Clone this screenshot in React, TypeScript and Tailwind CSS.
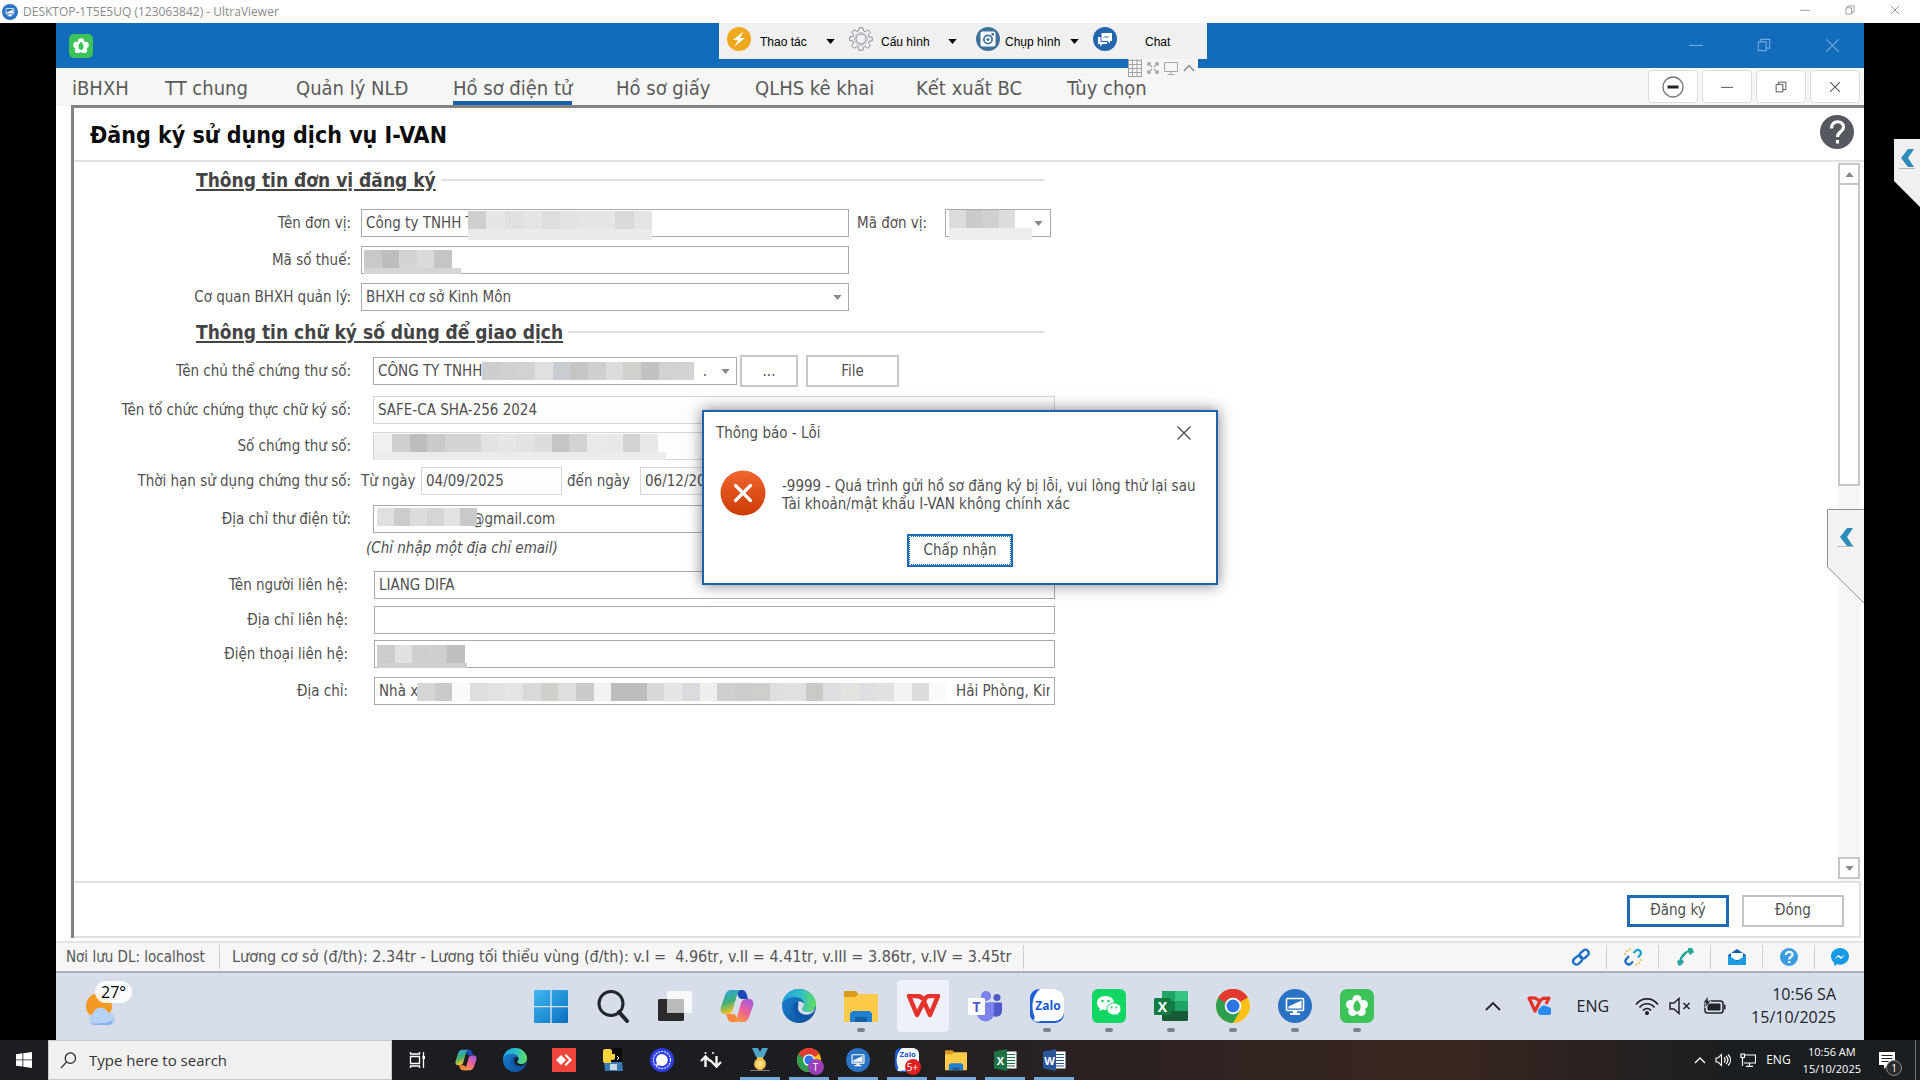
import type { ReactNode } from "react";

const tahoma = "font-['DejaVu_Sans_Condensed','DejaVu_Sans',sans-serif]";
const segoe = "font-['Open_Sans','Noto_Sans',sans-serif]";

/* ---------- small drawings ---------- */

function Caret({ className = "" }: { className?: string }) {
  return (
    <svg viewBox="0 0 10 6" className={`h-[5px] w-[9px] ${className}`} aria-hidden="true">
      <path d="M0 0h10L5 6z" fill="currentColor" />
    </svg>
  );
}

function Minimize({ className = "" }: { className?: string }) {
  return (
    <svg viewBox="0 0 16 16" className={className} fill="none" stroke="currentColor" strokeWidth="1.300" aria-hidden="true">
      <path d="M0 8.500h16" />
    </svg>
  );
}

function Restore({ className = "" }: { className?: string }) {
  return (
    <svg viewBox="0 0 16 16" className={className} fill="none" stroke="currentColor" strokeWidth="1.300" aria-hidden="true">
      <path d="M1.500 4.500h9v10h-9zM4.500 4.500v-3h10v10h-4" />
    </svg>
  );
}

function Cross({ className = "" }: { className?: string }) {
  return (
    <svg viewBox="0 0 16 16" className={className} fill="none" stroke="currentColor" strokeWidth="1.400" aria-hidden="true">
      <path d="M1.500 1.500l13 13M14.500 1.500l-13 13" />
    </svg>
  );
}

function ViewerIcon({ className = "" }: { className?: string }) {
  return (
    <svg viewBox="0 0 34 34" className={className} aria-hidden="true">
      <circle cx="17" cy="17" r="17" fill="#2a72c4" />
      <rect x="8.500" y="9.500" width="17" height="12" rx="1" fill="none" stroke="#fff" strokeWidth="1.600" />
      <path d="M10.500 19.500V17.500L23.500 11.500v8z" fill="#fff" />
      <path d="M15 22h4v2h3v2H12v-2h3z" fill="#fff" />
    </svg>
  );
}

function LotusIcon({ className = "" }: { className?: string }) {
  return (
    <svg viewBox="0 0 34 34" className={className} aria-hidden="true">
      <rect width="34" height="34" rx="7" fill="#3cc458" />
      <g fill="#fff">
        <circle cx="17" cy="10.500" r="4.500" />
        <circle cx="10.500" cy="15.500" r="4.500" />
        <circle cx="23.500" cy="15.500" r="4.500" />
        <circle cx="12.800" cy="22.500" r="4.500" />
        <circle cx="21.200" cy="22.500" r="4.500" />
      </g>
      <path d="M17 11c3 3 4 5 3.500 8-.3 2-1.500 3.500-3.500 3.500s-3.200-1.500-3.500-3.500c-.5-3 .5-5 3.500-8z" fill="#3cc458" />
    </svg>
  );
}

function WindowsLogo() {
  return (
    <svg viewBox="0 0 34 34" className="size-[34px]" aria-hidden="true">
      <defs>
        <linearGradient id="win" x1="0" y1="0" x2="1" y2="1">
          <stop offset="0" stopColor="#3fb9f0" />
          <stop offset="1" stopColor="#0a6fc2" />
        </linearGradient>
      </defs>
      <path d="M0 2a1 1 0 0 1 1-1h15.300v16H0zM17.700 1H33a1 1 0 0 1 1 1v15H17.700zM0 18.300h16.300V34H1a1 1 0 0 1-1-1zM17.700 18.300H34V33a1 1 0 0 1-1 1H17.700z" fill="url(#win)" />
    </svg>
  );
}

function SearchGlyph() {
  return (
    <svg viewBox="0 0 34 34" className="size-[34px]" fill="none" stroke="#22262c" aria-hidden="true">
      <circle cx="15" cy="14.500" r="12" strokeWidth="3" />
      <path d="M23 23l8 9" strokeWidth="4" strokeLinecap="round" />
    </svg>
  );
}

function TaskViewGlyph() {
  return (
    <svg viewBox="0 0 34 34" className="size-[34px]" aria-hidden="true">
      <rect x="0" y="10" width="26" height="22" rx="1.500" fill="#2b2b2b" />
      <rect x="9" y="2" width="25" height="22" rx="1.500" fill="#fff" opacity=".82" />
      <rect x="9" y="10" width="17" height="14" fill="#b9babc" />
    </svg>
  );
}

function CopilotIcon({ className = "" }: { className?: string }) {
  return (
    <svg viewBox="0 0 34 34" className={className} aria-hidden="true">
      <defs>
        <linearGradient id="cpA" x1="0" y1="0" x2="0.300" y2="1">
          <stop offset="0" stopColor="#2aa6ef" />
          <stop offset=".55" stopColor="#3fae7a" />
          <stop offset="1" stopColor="#f2c521" />
        </linearGradient>
        <linearGradient id="cpB" x1="0.800" y1="0" x2="0.300" y2="1">
          <stop offset="0" stopColor="#a35be0" />
          <stop offset=".5" stopColor="#ec5f9b" />
          <stop offset="1" stopColor="#fb9a3c" />
        </linearGradient>
      </defs>
      <path d="M16 1h6c3 0 4 2 5 5l1 4h-6c-2 0-3-1-4-3z" fill="#1e48b8" />
      <path d="M11 1h10c-2 0-3 2-4 5l-4 14c-1 4-3 5-6 5H5c-4 0-5-3-4-7L5 6c1-3 3-5 6-5z" fill="url(#cpA)" />
      <path d="M18 33h-6c-3 0-4-2-5-5l-1-3h6c2 0 3 0 4 2z" fill="#f7873e" />
      <path d="M23 33H13c2 0 3-2 4-5l4-14c1-3 3-4 6-4h2c4 0 5 3 4 7l-4 11c-1 3-3 5-6 5z" fill="url(#cpB)" />
    </svg>
  );
}

function EdgeIcon({ className = "", gap = "#d7deea" }: { className?: string; gap?: string }) {
  return (
    <svg viewBox="0 0 34 34" className={className} aria-hidden="true">
      <defs>
        <linearGradient id="edA" x1="0" y1="0.300" x2="1" y2="0.400">
          <stop offset="0" stopColor="#1f9fe0" />
          <stop offset=".55" stopColor="#30bfc4" />
          <stop offset="1" stopColor="#62dc61" />
        </linearGradient>
        <linearGradient id="edB" x1="0" y1="0" x2="1" y2="1">
          <stop offset="0" stopColor="#1b86d8" />
          <stop offset="1" stopColor="#0c4a94" />
        </linearGradient>
      </defs>
      <circle cx="17" cy="17" r="17" fill="url(#edB)" />
      <path d="M0 16C1 6 8 0 17 0c10 0 17 7 17 15 0 5-4 8-8 8-3 0-6-1-6-3 0-1 2-2 2-5 0-4-4-7-9-7C6 8 1 11 0 16z" fill="url(#edA)" />
      <path d="M13 14c-4 5-2 12 4 15 5 2 11 0 14-4 1-1 0-2-1-1-6 3-13 1-14-4-1-3 1-5 0-7-1-1-2 0-3 1z" fill="#0e57a8" />
      <path d="M16 13c2-1 5 0 6 2 0 3-2 4-2 5 0 2 3 3 6 3 3 0 5-1 7-3-1 3-3 4-5 5-6 2-12-1-12-6 0-2 1-4 0-6z" fill={gap} />
    </svg>
  );
}

function FolderIcon({ className = "" }: { className?: string }) {
  return (
    <svg viewBox="0 0 36 34" className={className} aria-hidden="true">
      <path d="M1 3a1 1 0 0 1 1-1h11l3 4-3 4H1z" fill="#d99a1c" />
      <path d="M1 8h11l4-3h18a1 1 0 0 1 1 1v26a1 1 0 0 1-1 1H2a1 1 0 0 1-1-1z" fill="#fccb47" />
      <path d="M7 33V26a4 4 0 0 1 4-4h14a4 4 0 0 1 4 4v7h-5v-5H12v5z" fill="#1f7fd0" />
      <path d="M12 28h12v5H12z" fill="#155fa6" />
    </svg>
  );
}

function WpsIcon() {
  return (
    <svg viewBox="0 0 34 24" className="h-6 w-[34px]" fill="none" stroke="#e5322a" strokeWidth="4.500" strokeLinejoin="round" aria-hidden="true">
      <path d="M17 5c-3-4-6-3-14-3l8 19 8-16c2-4 5-3 13-3l-8 19-6-13" />
    </svg>
  );
}

function TeamsIcon() {
  return (
    <svg viewBox="0 0 34 34" className="size-[34px]" aria-hidden="true">
      <circle cx="18" cy="7" r="5" fill="#7b83eb" />
      <circle cx="29" cy="8.500" r="3.500" fill="#5059c9" />
      <path d="M21 13.500h12a1 1 0 0 1 1 1V22a6 6 0 0 1-9 5z" fill="#5059c9" />
      <path d="M9 13.500h17V24a8.500 8.500 0 0 1-17 0z" fill="#7b83eb" />
      <rect x="0" y="9" width="17" height="17" rx="1" fill="#fff" />
      <text x="8.500" y="22.500" textAnchor="middle" fontSize="14" fontWeight="700" fill="#5059c9" fontFamily="Open Sans, sans-serif">T</text>
    </svg>
  );
}

function ZaloIcon({ className = "", small }: { className?: string; small?: boolean }) {
  return (
    <svg viewBox="0 0 34 34" className={className} aria-hidden="true">
      <rect width="34" height="34" rx="9" fill="#1a5fd6" />
      <path d="M10 0h15a9 9 0 0 1 9 9v14a9 9 0 0 1-9 9H11c-3 1-6 1-8-1 2-1 2-3 1-5-3-8-2-19 6-26z" fill="#fff" />
      <text x="18" y={small ? 13 : 20.5} textAnchor="middle" fontSize={small ? 11 : 12} fontWeight="700" fill="#1558d6" fontFamily="Open Sans, sans-serif">Zalo</text>
    </svg>
  );
}

function WeChatIcon() {
  return (
    <svg viewBox="0 0 34 34" className="size-[34px]" aria-hidden="true">
      <rect width="34" height="34" rx="6" fill="#12d765" />
      <path d="M13.500 7C8.500 7 5 10.200 5 14c0 2.200 1.100 4 3 5.300L7.300 22l3-1.500c1 .3 2 .4 3.200.4 5 0 8.500-3 8.500-6.900S18.500 7 13.500 7z" fill="#fff" />
      <path d="M22 14c-4 0-7 2.700-7 6s3 6 7 6c.9 0 1.700-.1 2.500-.4L27 27l-.6-2.300c1.600-1.100 2.600-2.800 2.600-4.700 0-3.300-3-6-7-6z" fill="#fff" stroke="#12d765" />
      <g fill="#12d765">
        <circle cx="10.500" cy="12" r="1.300" />
        <circle cx="16.500" cy="12" r="1.300" />
        <circle cx="19.700" cy="18.500" r="1" />
        <circle cx="24.300" cy="18.500" r="1" />
      </g>
    </svg>
  );
}

function ExcelIcon() {
  return (
    <svg viewBox="0 0 34 32" className="h-8 w-[34px]" aria-hidden="true">
      <rect x="8" y="1" width="26" height="30" rx="1.500" fill="#185c37" />
      <path d="M8 1h13v10H8z" fill="#21a366" />
      <path d="M21 1h12l1 1v9H21z" fill="#33c481" />
      <path d="M8 11h13v10H8z" fill="#107c41" />
      <path d="M21 11h13v10H21z" fill="#21a366" />
      <rect x="0" y="8" width="17" height="17" rx="1.500" fill="#107c41" />
      <text x="8.500" y="21.500" textAnchor="middle" fontSize="14" fontWeight="700" fill="#fff" fontFamily="Open Sans, sans-serif">X</text>
    </svg>
  );
}

function ChromeIcon({ className = "" }: { className?: string }) {
  return (
    <svg viewBox="0 0 34 34" className={className} aria-hidden="true">
      <circle cx="17" cy="17" r="17" fill="#fbc116" />
      <path d="M17 17L2.300 8.500A17 17 0 0 1 31.700 8.500z" fill="#e23a2e" />
      <path d="M2.300 8.500A17 17 0 0 0 17 34l7.400-12.800L17 17z" fill="#2e9e4f" />
      <path d="M2.300 8.500L9.600 21.200 17 17l3-8.500z" fill="#2e9e4f" />
      <path d="M2.300 8.500A17 17 0 0 1 31.700 8.500H17a8.500 8.500 0 0 0-8 5.500z" fill="#e23a2e" />
      <circle cx="17" cy="17" r="8.300" fill="#fff" />
      <circle cx="17" cy="17" r="6.500" fill="#2f74e6" />
    </svg>
  );
}

function OfficeIcon({ letter, color }: { letter: string; color: string }) {
  return (
    <svg viewBox="0 0 24 24" className="size-6" aria-hidden="true">
      <rect x="12" y="3.500" width="11.500" height="17" fill="#fff" />
      <path d="M14 6.500h8M14 9.500h8M14 12.500h8M14 15.500h8M14 18h8" stroke={color} strokeWidth="1.200" />
      <path d="M1 3.500L14 1v22L1 20.500z" fill={color} />
      <text x="7.500" y="16.500" textAnchor="middle" fontSize="11" fontWeight="700" fill="#fff" fontFamily="Open Sans, sans-serif">{letter}</text>
    </svg>
  );
}

/* ---------- pixelated privacy patches ---------- */

function Mosaic({ place, cells, under }: { place: string; cells: string[]; under?: string }) {
  return (
    <div className={`pointer-events-none absolute ${place}`} aria-hidden="true">
      <div className="flex h-[18px]">
        {cells.map((c, i) => (
          <span key={i} className="h-full flex-1" style={{ backgroundColor: c }} />
        ))}
      </div>
      {under && <div className={under} />}
    </div>
  );
}

/* ---------- viewer chrome ---------- */

function ViewerTitle() {
  return (
    <header className={`flex h-[23px] items-center justify-between bg-white pl-[2px] text-[#8a8a8a] ${segoe}`}>
      <div className="flex items-center gap-[5px]">
        <ViewerIcon className="size-4" />
        <h1 className="text-xs font-normal">DESKTOP-1T5E5UQ (123063842) - UltraViewer</h1>
      </div>
      <div className="flex pr-[2px] pb-1">
        <button aria-label="Minimize" className="grid w-[45px] place-items-center"><Minimize className="size-[10px]" /></button>
        <button aria-label="Restore" className="grid w-[45px] place-items-center"><Restore className="size-[10px]" /></button>
        <button aria-label="Close" className="grid w-[46px] place-items-center"><Cross className="size-[10px]" /></button>
      </div>
    </header>
  );
}

function ViewerToolbar() {
  return (
    <div className="absolute top-0 left-1/2 -ml-[241px] w-[488px] font-['Liberation_Sans',sans-serif] text-xs text-black">
      <div className="flex h-9 items-center bg-[#f0f0f0] pl-2">
        <button className="flex w-[122px] items-center">
          <svg viewBox="0 0 24 24" className="-mt-1 size-6" aria-hidden="true">
            <circle cx="12" cy="12" r="12" fill="#f0a81c" />
            <path d="M16.500 4.500L6 13h5l-3.500 6.500L18 11h-5z" fill="#fff" />
          </svg>
          <span className="w-[62px] pt-[2px] pl-[9px] text-left whitespace-nowrap">Thao tác</span>
          <Caret className="ml-[13px]" />
        </button>
        <button className="flex w-[127px] items-center">
          <svg viewBox="0 0 24 24" className="-mt-1 size-6" fill="none" stroke="#6d7683" strokeWidth=".8" aria-hidden="true">
            <circle cx="12" cy="12" r="5" />
            <circle cx="12" cy="12" r="6.500" strokeWidth=".4" />
            <path d="M10 .800h4l.5 3 2 .8L19 2.900 21.500 5.500 19.500 8l.8 2 3 .3v3.500l-3 .5-.8 2 1.900 2.500-2.600 2.600-2.500-1.900-1.900.8-.4 3h-4l-.4-3-2-.8-2.500 1.900-2.500-2.600L4.500 16l-.8-2-3-.5V10l3-.4.8-2L2.700 5.200 5.200 2.700 7.700 4.500l1.900-.8z" />
          </svg>
          <span className="w-[62px] pt-[2px] pl-2 text-left whitespace-nowrap">Cấu hình</span>
          <Caret className="ml-[13px]" />
        </button>
        <button className="flex w-[117px] items-center">
          <svg viewBox="0 0 24 24" className="-mt-1 size-6" aria-hidden="true">
            <circle cx="12" cy="12" r="12" fill="#3f729b" />
            <rect x="4.500" y="4.500" width="15" height="15" rx="2" fill="#fff" />
            <circle cx="12" cy="12.500" r="5" fill="#3f729b" />
            <circle cx="12" cy="12.500" r="3.200" fill="#fff" />
            <circle cx="12" cy="12.500" r="1.600" fill="#3f729b" />
            <rect x="15.500" y="6" width="2.500" height="2.500" fill="#3f729b" />
          </svg>
          <span className="w-[62px] pt-[2px] pl-[5px] text-left whitespace-nowrap">Chụp hình</span>
          <Caret className="ml-2" />
        </button>
        <button className="flex items-center">
          <svg viewBox="0 0 24 24" className="-mt-1 size-6" aria-hidden="true">
            <circle cx="12" cy="12" r="12" fill="#2466ae" />
            <path d="M8.500 6h10.500v8h-2v2.500L14.500 14h-6z" fill="#fff" />
            <path d="M5 10h2.500v5H14v2H9.500L7 19.500V17H5z" fill="#fff" />
            <path d="M10.500 10.500c1.500-2 2.500 1 5-1" fill="none" stroke="#2466ae" />
          </svg>
          <span className="pt-[2px] pl-7">Chat</span>
        </button>
      </div>
      <div className="ml-[409px] flex h-[18px] w-[70px] items-center gap-[5px] bg-[#f5f5f5] text-[#a3a3a3]">
        <svg viewBox="0 0 14 18" className="h-[18px] w-[14px]" fill="none" stroke="currentColor" aria-hidden="true">
          <path d="M.500 0v18M4.500 0v18M9 0v18M13.500 0v18M0 1.500h14M0 5.500h14M0 9.500h14M0 13.500h14M0 17.500h14" />
        </svg>
        <svg viewBox="0 0 12 12" className="size-3" fill="none" stroke="currentColor" strokeWidth="1.300" aria-hidden="true">
          <path d="M1 1l4 4M1 4V1h3M11 1L7 5M8 1h3v3M1 11l4-4M1 8v3h3M11 11L7 7M11 8v3H8" />
        </svg>
        <svg viewBox="0 0 14 14" className="size-[14px]" fill="none" stroke="currentColor" aria-hidden="true">
          <path d="M.500 1.500h13v9H.500zM7 10.500v2.500M3.500 13.500h7" />
        </svg>
        <svg viewBox="0 0 12 8" className="h-2 w-3" fill="none" stroke="#888" strokeWidth="1.500" aria-hidden="true">
          <path d="M1 7l5-5.500L11 7" />
        </svg>
      </div>
    </div>
  );
}

/* ---------- application ---------- */

const menu = [
  { name: "iBHXH", w: "w-[93px]" },
  { name: "TT chung", w: "w-[131px]" },
  { name: "Quản lý NLĐ", w: "w-[157px]" },
  { name: "Hồ sơ điện tử", w: "w-[163px]", on: true },
  { name: "Hồ sơ giấy", w: "w-[139px]" },
  { name: "QLHS kê khai", w: "w-[161px]" },
  { name: "Kết xuất BC", w: "w-[151px]" },
  { name: "Tùy chọn", w: "w-[100px]" },
];

const boxBtn = "grid h-[33px] w-[50px] place-items-center rounded-sm border border-[#dcdcdc] bg-white";

function MenuBar() {
  return (
    <nav className="flex h-[38px] items-start justify-between bg-[#f6f6f6] pr-1 pl-4">
      <div className="flex text-xl leading-8 text-[#5a5a5a]">
        {menu.map((m) => (
          <div key={m.name} className={`pt-1 whitespace-nowrap ${m.w}`}>
            <button className={`h-[33px] border-b-4 ${m.on ? "border-[#1561ad]" : "border-transparent"}`}>
              <span className="block h-[29px] leading-8">{m.name}</span>
            </button>
          </div>
        ))}
      </div>
      <div className="flex gap-1 pt-[2px] text-[#555]">
        <button aria-label="Collapse" className={boxBtn}>
          <svg viewBox="0 0 22 22" className="size-[22px]" fill="none" aria-hidden="true">
            <circle cx="11" cy="11" r="10" stroke="#777" strokeWidth="1.300" />
            <path d="M5.500 11h11" stroke="#222" strokeWidth="3" />
          </svg>
        </button>
        <button aria-label="Minimize window" className={boxBtn}><Minimize className="size-3" /></button>
        <button aria-label="Restore window" className={boxBtn}><Restore className="size-3" /></button>
        <button aria-label="Close window" className={boxBtn}><Cross className="size-3" /></button>
      </div>
    </nav>
  );
}

const field = "h-7 border border-[#aaaaaa] bg-white px-1 outline-none";
const dim = "h-7 border border-[#d6d6d6] bg-[#fdfdfd] px-1 outline-none";

function Row({ id, label, gap = "", top, late, children }: { id: string; label: string; gap?: string; top: string; late?: boolean; children: ReactNode }) {
  return (
    <div className={`flex h-7 items-center ${top}`}>
      <label htmlFor={id} className={`shrink-0 text-right whitespace-nowrap ${late ? "w-[274px]" : "w-[277px]"}`}>
        {label}
      </label>
      <div className={`relative flex items-center ${gap}`}>{children}</div>
    </div>
  );
}

function Section({ title, top }: { title: string; top: string }) {
  return (
    <div className={`flex h-7 w-[970px] items-center gap-[5px] pl-[122px] ${top}`}>
      <h3 className="text-[19px] font-bold whitespace-nowrap text-[#444] underline decoration-2 underline-offset-2">{title}</h3>
      <span className="h-[2px] flex-1 bg-[#e0e2e4]" />
    </div>
  );
}

function Form() {
  return (
    <form className="min-w-0 flex-1 overflow-hidden pt-1 text-[15px] text-[#505050]">
      <Section title="Thông tin đơn vị đăng ký" top="" />
      <Row id="unit" label="Tên đơn vị:" top="mt-[15px]" gap="ml-[10px]">
        <input id="unit" defaultValue="Công ty TNHH T" className={`${field} w-[488px]`} />
        <Mosaic place="left-[107px] top-[2px] w-[184px]" cells={["#cfcfcf", "#e6e6e7", "#e0e0e0", "#e4e4e4", "#dededf", "#e2e2e2", "#e5e5e3", "#e5e5e5", "#d9d9d8", "#e4e4e4"]} under="h-[11px] bg-[#e9eaea]" />
        <label htmlFor="code" className="ml-2 w-[88px] whitespace-nowrap">Mã đơn vị:</label>
        <select id="code" className={`${field} w-[106px] appearance-none`}><option></option></select>
        <Caret className="absolute right-2 text-[#888]" />
        <Mosaic place="right-[19px] top-px w-[83px]" cells={["#dcdcdc", "#cbcbcb", "#d0d0d0", "#dcdddd", "#ffffff"]} under="h-3 bg-[#ededed]" />
      </Row>
      <Row id="tax" label="Mã số thuế:" top="mt-[9px]" gap="ml-[10px]">
        <input id="tax" className={`${field} w-[488px]`} />
        <Mosaic place="left-[3px] top-1 w-[88px]" cells={["#c9c9c9", "#bdbdbd", "#d3d3d2", "#dadad9", "#c5c5c5"]} under="h-[6px] w-[97px] bg-[#d5d5d5]" />
      </Row>
      <Row id="agency" label="Cơ quan BHXH quản lý:" top="mt-[9px]" gap="ml-[10px]">
        <select id="agency" className={`${field} w-[488px] appearance-none`}><option>BHXH cơ sở Kinh Môn</option></select>
        <Caret className="absolute right-[7px] text-[#888]" />
      </Row>
      <Section title="Thông tin chữ ký số dùng để giao dịch" top="mt-[7px]" />
      <Row id="subject" label="Tên chủ thể chứng thư số:" top="mt-[11px]" gap="ml-[22px]">
        <div className="relative flex items-center">
          <select id="subject" className={`${field} w-[364px] appearance-none`}><option>CÔNG TY TNHH</option></select>
          <Mosaic place="left-[109px] top-[5px] w-[212px]" cells={["#cdcdcf", "#d0d0d3", "#d2d2d5", "#e0e0e1", "#c9ccd1", "#c5c5c5", "#cecfd0", "#dcdcda", "#d0d0cc", "#c2c2c0", "#d2d2d2", "#d3d3d3"]} />
          <span className="absolute right-[30px]">.</span>
          <Caret className="absolute right-[7px] text-[#888]" />
        </div>
        <button type="button" className="ml-[3px] h-8 w-[58px] border-2 border-[#c8c8c8] bg-white">...</button>
        <button type="button" className="ml-2 h-8 w-[93px] border-2 border-[#c8c8c8] bg-white">File</button>
      </Row>
      <Row id="issuer" label="Tên tổ chức chứng thực chữ ký số:" top="mt-[11px]" gap="ml-[22px]">
        <input id="issuer" readOnly defaultValue="SAFE-CA SHA-256 2024" className={`${dim} w-[682px]`} />
      </Row>
      <Row id="serial" label="Số chứng thư số:" top="mt-2" gap="ml-[22px]">
        <input id="serial" readOnly className={`${dim} w-[682px]`} />
        <Mosaic place="left-px top-[2px] w-[284px]" cells={["#f1f1ef", "#cfcfcf", "#bdbdbd", "#cacac9", "#d3d3d3", "#d3d3d3", "#e2e2e1", "#e6e6e6", "#e3e3e3", "#dddddd", "#c5c5c5", "#d2d2d2", "#e9e9e9", "#e8e8e8", "#d2d2d2", "#e8e8e8"]} under="h-2 w-[292px] bg-[#ebebea]" />
      </Row>
      <Row id="from" label="Thời hạn sử dụng chứng thư số:" top="mt-[7px]" gap="ml-[10px]">
        <span className="w-[60px] whitespace-nowrap">Từ ngày</span>
        <input id="from" readOnly defaultValue="04/09/2025" className={`${dim} w-[141px]`} />
        <label htmlFor="to" className="w-[78px] pl-[5px] whitespace-nowrap">đến ngày</label>
        <input id="to" readOnly defaultValue="06/12/2026" className={`${dim} w-[141px]`} />
      </Row>
      <Row id="email" label="Địa chỉ thư điện tử:" top="mt-[10px]" gap="ml-[22px]">
        <input id="email" defaultValue="@gmail.com" className={`${field} w-[682px] pl-[97px]`} />
        <Mosaic place="left-1 top-[3px] w-[100px]" cells={["#e0e0e0", "#cccccc", "#dcdcdc", "#d5d5d6", "#e2e2e2", "#c9c9c9"]} />
      </Row>
      <p className="mt-[5px] h-5 pl-[292px] leading-5 italic">(Chỉ nhập một địa chỉ email)</p>
      <Row id="contact" label="Tên người liên hệ:" top="mt-[13px]" gap="ml-[26px]" late>
        <input id="contact" defaultValue="LIANG DIFA" className={`${field} w-[681px]`} />
      </Row>
      <Row id="contactAddress" label="Địa chỉ liên hệ:" top="mt-[7px]" gap="ml-[26px]" late>
        <input id="contactAddress" className={`${field} w-[681px]`} />
      </Row>
      <Row id="phone" label="Điện thoại liên hệ:" top="mt-[6px]" gap="ml-[26px]" late>
        <input id="phone" className={`${field} w-[681px]`} />
        <Mosaic place="left-[3px] top-[5px] w-[88px]" cells={["#cccccb", "#e1e1e1", "#cecece", "#cfcfce", "#bfbfbf"]} under="h-[5px] w-[90px] bg-[#cfcfcf]" />
      </Row>
      <Row id="address" label="Địa chỉ:" top="mt-[9px]" gap="ml-[26px]" late>
        <div className={`${field} flex w-[681px] items-center`}>
          <input id="address" defaultValue="Nhà x" className="w-[577px] shrink-0 outline-none" />
          <span className="min-w-0 overflow-hidden whitespace-nowrap">Hải Phòng, Kin</span>
        </div>
        <Mosaic place="left-[43px] top-[6px] w-[530px]" cells={["#d5d5d6", "#c8cac9", "#fafafa", "#dedede", "#e2e2e2", "#e4e4e4", "#d9d9d9", "#d0d0ca", "#dedede", "#cacbcc", "#f2f2f2", "#bdbebc", "#bdbebc", "#d8d8d8", "#e6e6e6", "#dadadf", "#eeeeec", "#cfcfcf", "#cdcdce", "#cececb", "#dfdfdf", "#e0e0e3", "#c9c9c5", "#dedee2", "#e3e3df", "#dedee3", "#e1e1e1", "#f3f3f3", "#dddddf", "#fafafa"]} />
      </Row>
    </form>
  );
}

function ScrollBar() {
  return (
    <div className="mr-1 flex w-[22px] flex-col bg-[#f6f6f6] pt-px text-[#888]">
      <button aria-label="Scroll up" className="grid h-[22px] place-items-center border-2 border-[#c6c6c6] bg-white"><Caret className="rotate-180" /></button>
      <span className="h-[301px] border-2 border-t-0 border-[#c6c6c6] bg-white" />
      <button aria-label="Scroll down" className="mt-auto mb-[2px] grid h-[22px] place-items-center border-2 border-[#c6c6c6] bg-white"><Caret /></button>
    </div>
  );
}

function ErrorDialog() {
  return (
    <div role="dialog" aria-labelledby="dlg" className="absolute inset-x-0 top-[387px] mx-auto w-[516px] border-2 border-[#1d62aa] bg-white px-3 pb-4 text-[15px] text-[#505050] shadow-[0_0_14px_rgba(0,0,0,0.5)]">
      <div className="flex h-[42px] items-center justify-between pr-3">
        <h2 id="dlg">Thông báo - Lỗi</h2>
        <button aria-label="Close dialog"><Cross className="size-4" /></button>
      </div>
      <div className="flex items-start gap-4 pt-4 pl-1">
        <svg viewBox="0 0 46 46" className="size-[46px] shrink-0" aria-hidden="true">
          <defs>
            <linearGradient id="err" x1="0" y1="0" x2="0" y2="1">
              <stop offset="0" stopColor="#f0652f" />
              <stop offset="1" stopColor="#cc3a06" />
            </linearGradient>
          </defs>
          <circle cx="23" cy="23" r="22.500" fill="url(#err)" />
          <path d="M15.500 15.500l15 15M30.500 15.500l-15 15" stroke="#fff" strokeWidth="3.200" strokeLinecap="round" />
        </svg>
        <p className="pt-[7px] leading-[18px] whitespace-nowrap">
          -9999 - Quá trình gửi hồ sơ đăng ký bị lỗi, vui lòng thử lại sau
          <br />
          Tài khoản/mật khẩu I-VAN không chính xác
        </p>
      </div>
      <div className="flex justify-center pt-[18px]">
        <button className="h-[33px] w-[106px] border-[3px] border-[#1d6bb5] bg-white outline-1 -outline-offset-[3px] outline-dotted outline-white">Chấp nhận</button>
      </div>
    </div>
  );
}

const statusIcons: { name: string; art: ReactNode }[] = [
  { name: "Link", art: <g fill="none" stroke="#1b6fc4" strokeWidth="2.400"><rect x="0.500" y="9" width="10" height="6.500" rx="3.200" transform="rotate(-42 5.500 12)" /><rect x="7" y="3" width="10" height="6.500" rx="3.200" transform="rotate(-42 12 6)" /></g> },
  { name: "Unlink", art: <g fill="none" strokeWidth="2.300"><path d="M5 8l-3 3.500c-2 3 2 6.500 5 4L9 13.500" stroke="#1b6fc4" /><path d="M9.500 5L12 2.500c3-2 6 1.500 4.500 4L14 9.500" stroke="#27a5cf" /><path d="M2 2l2 2M6 0v2.500M0 6h2.500M16 16l-2-2M12 18v-2.500M18 12h-2.500" stroke="#f2bd4d" strokeWidth="1.300" /></g> },
  { name: "Call", art: <path d="M1 13l5-2 2 3-4 4-2-1zM3 14C4 7 8 3 14 2M12 0l4 0 2 4-4 3-2-3z" fill="#26a599" /> },
  { name: "Mail", art: <g><path d="M0 7l9-6 9 6v10H0z" fill="#1560a8" /><path d="M3 5h12v7H3z" fill="#fff" /><path d="M0 7l9 6 9-6v10H0z" fill="#1d9ae0" /></g> },
  { name: "Help", art: <g><circle cx="9" cy="9" r="9" fill="#3a9be0" /><path d="M6 7c0-4 6.500-4 6.500-.5C12.500 9 9.200 9 9.200 11.500M9.200 13v2" fill="none" stroke="#fff" strokeWidth="2.200" /></g> },
  { name: "Messenger", art: <g><path d="M9 0C4 0 0 3.600 0 8.300c0 2.600 1.200 4.900 3.200 6.400V18l3-1.700c.9.200 1.800.4 2.800.4 5 0 9-3.700 9-8.400S14 0 9 0z" fill="#159be8" /><path d="M3.500 11l4-4.300 2.500 2.200 4-2.200-4 4.300-2.500-2.200z" fill="#fff" /></g> },
];

function StatusBar() {
  return (
    <footer className="flex h-8 items-center justify-between border-t-2 border-b-2 border-t-[#e4e4e4] border-b-[#a9b0b8] bg-[#f6f6f6] pl-[10px] text-[#555]">
      <div className="flex items-center whitespace-nowrap">
        <span className="w-[153px] text-[15px]">Nơi lưu DL: localhost</span>
        <span className="border-x border-[#cfcfcf] px-3 text-base leading-6">Lương cơ sở (đ/th): 2.34tr - Lương tối thiểu vùng (đ/th): v.I =&nbsp; 4.96tr, v.II = 4.41tr, v.III = 3.86tr, v.IV = 3.45tr</span>
      </div>
      <div className="flex">
        {statusIcons.map((s) => (
          <button key={s.name} aria-label={s.name} className="grid h-6 w-[52px] place-items-center border-r border-[#cfcfcf] last:w-[49px] last:border-0">
            <svg viewBox="0 0 18 18" className="size-[18px] overflow-visible" aria-hidden="true">{s.art}</svg>
          </button>
        ))}
      </div>
    </footer>
  );
}

const remoteApps: { name: string; art: ReactNode; dot?: boolean; active?: boolean }[] = [
  { name: "Start menu", art: <WindowsLogo /> },
  { name: "Search apps", art: <SearchGlyph /> },
  { name: "Task view", art: <TaskViewGlyph /> },
  { name: "Copilot", art: <CopilotIcon className="size-[34px]" /> },
  { name: "Edge", art: <EdgeIcon className="size-[34px]" /> },
  { name: "File Explorer", art: <FolderIcon className="h-[34px] w-9" />, dot: true },
  { name: "WPS", art: <WpsIcon />, active: true },
  { name: "Teams", art: <TeamsIcon /> },
  { name: "Zalo", art: <ZaloIcon className="size-[34px]" />, dot: true },
  { name: "WeChat", art: <WeChatIcon />, dot: true },
  { name: "Excel", art: <ExcelIcon />, dot: true },
  { name: "Chrome", art: <ChromeIcon className="size-[34px]" />, dot: true },
  { name: "UltraViewer", art: <ViewerIcon className="size-[34px]" />, dot: true },
  { name: "iBHXH app", art: <LotusIcon className="size-[34px]" />, dot: true },
];

function RemoteTaskbar() {
  return (
    <div className={`grid h-[67px] grid-cols-[1fr_auto_1fr] items-center bg-[#d7deea] pb-[2px] text-[#20242a] ${segoe}`}>
      <div className="relative ml-7 h-[50px] w-16">
        <svg viewBox="0 0 40 40" className="absolute top-2 left-0 size-10" aria-hidden="true">
          <circle cx="15" cy="17" r="13" fill="#f39a26" />
          <path d="M10 36a6 6 0 0 1-1-11.500 8 8 0 0 1 15-1 6.500 6.500 0 0 1 3 12.500z" fill="#b6d2f6" />
          <path d="M10 36a6 6 0 0 1-3-2c6 1 14 1 22-3a6 6 0 0 1-3 5z" fill="#8db0ea" />
        </svg>
        <span className="absolute top-0 left-[11px] rounded-full bg-white/90 px-[6px] text-base leading-[22px] text-black">27°</span>
      </div>
      <div className="-ml-[13px] flex gap-[10px]">
        {remoteApps.map((a) => (
          <button key={a.name} aria-label={a.name} className={`relative grid size-[52px] place-items-center rounded ${a.active ? "bg-[#eef1f9]" : ""}`}>
            {a.art}
            {a.dot && <span className="absolute bottom-0 h-1 w-2 rounded-full bg-[#7c828c]" />}
          </button>
        ))}
      </div>
      <div className="flex items-center justify-end pr-7">
        <svg viewBox="0 0 16 10" className="mr-[26px] h-[10px] w-4" fill="none" stroke="currentColor" strokeWidth="1.800" aria-hidden="true"><path d="M1 9l7-7 7 7" /></svg>
        <svg viewBox="0 0 24 20" className="mr-[26px] h-5 w-6" aria-hidden="true">
          <path d="M12 5c-3-4-5-3-10-3l6 13 5-10c2-3 4-3 9-3l-3 6" fill="none" stroke="#e5322a" strokeWidth="3.200" strokeLinejoin="round" />
          <path d="M13 19a4 4 0 0 1 0-7 5 5 0 0 1 8-1 4 4 0 0 1 0 8z" fill="#2a8cf2" />
        </svg>
        <span className="mr-[26px] text-base">ENG</span>
        <svg viewBox="0 0 24 18" className="mr-[10px] h-[18px] w-6" fill="none" stroke="currentColor" strokeWidth="1.700" aria-hidden="true">
          <path d="M1 7.500c6-7.500 16-7.500 22 0M4.500 10.500c4-5 11-5 15 0M8 13.500c2.200-2.700 5.800-2.700 8 0" />
          <circle cx="12" cy="16" r="1.200" fill="currentColor" />
        </svg>
        <svg viewBox="0 0 22 18" className="mr-3 h-[18px] w-[22px]" fill="none" stroke="currentColor" strokeWidth="1.500" aria-hidden="true">
          <path d="M1 6h4l5-4.500v15L5 12H1zM14.500 6l6 6M20.500 6l-6 6" />
        </svg>
        <svg viewBox="0 0 24 20" className="mr-6 h-5 w-6" aria-hidden="true">
          <rect x="2" y="5" width="18" height="12" rx="2.500" fill="none" stroke="currentColor" strokeWidth="1.500" />
          <rect x="4.500" y="7.500" width="13" height="7" rx="1" fill="currentColor" />
          <path d="M21 8.500h1.500v5H21z" fill="currentColor" />
          <path d="M5 0L0 7h3l-1 5 6-7H5z" fill="currentColor" stroke="#d7deea" strokeWidth=".8" />
        </svg>
        <time className="text-right text-base leading-[23px]">10:56 SA<br />15/10/2025</time>
      </div>
    </div>
  );
}

const localApps: { name: string; art: ReactNode; open?: boolean }[] = [
  { name: "Local task view", art: <svg viewBox="0 0 24 24" className="size-6" fill="none" stroke="#fff" strokeWidth="1.300" aria-hidden="true"><path d="M5.500 8.500h9v7h-9zM5.500 4v2h9V4M5.500 20v-2h9v2M18.500 4v16" /><path d="M17.500 8h2.500v3h-2.500z" fill="#fff" stroke="none" /></svg> },
  { name: "Local Copilot", art: <CopilotIcon className="size-[22px]" /> },
  { name: "Local Edge", art: <EdgeIcon className="size-6" gap="#1b1d21" /> },
  { name: "AnyDesk", art: <svg viewBox="0 0 24 24" className="size-6" aria-hidden="true"><path d="M0 0h24v24H0z" fill="#ef443b" /><path d="M9 7l5 5-5 5-5-5z" fill="#fff" /><path d="M12.500 7.500L14 6l6 6-6 6-1.500-1.500L17 12z" fill="#fff" /></svg> },
  { name: "Python IDLE", art: <svg viewBox="0 0 24 24" className="size-6" aria-hidden="true"><path d="M10 0h11v14H10z" fill="#0c0c0c" /><path d="M3 14h18l1 9H4z" fill="#3a78b4" /><path d="M9 16h7v6H9z" fill="#c9d6e2" /><path d="M2 3a2 2 0 0 1 2-2h5a2 2 0 0 1 2 2v3h3v4a2 2 0 0 1-2 2h-2v3H4a2 2 0 0 1-2-2z" fill="#fbd43c" /><path d="M16 8l2 2-2 2" stroke="#fff" fill="none" /></svg> },
  { name: "Signal", art: <svg viewBox="0 0 24 24" className="size-6" aria-hidden="true"><circle cx="12" cy="12" r="12" fill="#2c3ee8" /><circle cx="12" cy="12" r="8.500" fill="none" stroke="#fff" strokeDasharray="2 1" strokeWidth="1.100" /><path d="M12 6a6 6 0 1 1-3 11.300L6 18l.8-3A6 6 0 0 1 12 6z" fill="#fff" /></svg> },
  { name: "Transfer", art: <svg viewBox="0 0 24 24" className="size-6" fill="none" stroke="#fff" strokeWidth="2.300" aria-hidden="true"><path d="M2 13l4.500-4.500L11 13M6.500 9v10M13 14l4.500 4.500L22 14M17.500 18V8M11 12l3 3" /><circle cx="6.500" cy="5" r="1" fill="#fff" stroke="none" /><circle cx="14" cy="5" r="1" fill="#fff" stroke="none" /></svg> },
  { name: "Medal", open: true, art: <svg viewBox="0 0 24 24" className="size-6" aria-hidden="true"><path d="M4 0h6l2 4 2-4h6l-4 9H8z" fill="#4fa3c9" /><path d="M9 9h6v3H9z" fill="#e8c86a" /><circle cx="12" cy="16" r="6" fill="#f5c24c" /><circle cx="12" cy="16" r="3.500" fill="#ffdc80" /><path d="M2 22.500h20" stroke="#8a8173" /></svg> },
  { name: "Local Chrome", open: true, art: <span className="relative block size-6"><ChromeIcon className="size-6" /><span className="absolute top-[11px] left-[11px] grid size-4 place-items-center rounded-full bg-[#9a3fb5] text-[10px] leading-none">T</span></span> },
  { name: "Local UltraViewer", open: true, art: <ViewerIcon className="size-6" /> },
  { name: "Local Zalo", open: true, art: <span className="relative block size-6"><ZaloIcon className="size-6" small /><span className="absolute top-[11px] left-[10px] grid size-4 place-items-center rounded-full bg-[#e02020] text-[10px] leading-none">5+</span></span> },
  { name: "Local Explorer", open: true, art: <FolderIcon className="h-[22px] w-6" /> },
  { name: "Local Excel", open: true, art: <OfficeIcon letter="X" color="#1e7145" /> },
  { name: "Local Word", open: true, art: <OfficeIcon letter="W" color="#2a5699" /> },
];

function LocalTaskbar() {
  return (
    <div className={`flex h-10 items-stretch bg-linear-to-r from-[#1b1d21] from-40% via-[#3a2620] via-75% to-[#1b1e20] to-90% text-white ${segoe}`}>
      <button aria-label="Start" className="grid w-12 place-items-center">
        <svg viewBox="0 0 16 16" className="size-4" fill="#fff" aria-hidden="true"><path d="M0 2.200l6.500-.9v6.200H0zM7.300 1.200L16 0v7.500H7.300zM0 8.300h6.500v6.300L0 13.700zM7.300 8.300H16V16l-8.700-1.200z" /></svg>
      </button>
      <label className="flex w-[344px] items-center gap-3 border border-[#c8c8c8] bg-[#f1f1f1] pl-[11px]">
        <svg viewBox="0 0 18 18" className="size-[17px] shrink-0" fill="none" stroke="#222" strokeWidth="1.300" aria-hidden="true"><circle cx="11" cy="6.500" r="5.500" /><path d="M7 10.500L1 17" /></svg>
        <input aria-label="Search" placeholder="Type here to search" className="w-full text-[15px] outline-none placeholder:text-[#333]" />
      </label>
      <div className="flex">
        {localApps.map((a) => (
          <button key={a.name} aria-label={a.name} className="relative grid w-[49px] place-items-center">
            {a.art}
            {a.open && <span className="absolute bottom-0 h-[3px] w-10 bg-[#76a9dc]" />}
          </button>
        ))}
      </div>
      <div className="ml-auto flex items-center text-xs">
        <svg viewBox="0 0 12 8" className="mr-[9px] h-2 w-3" fill="none" stroke="#fff" strokeWidth="1.300" aria-hidden="true"><path d="M1 7l5-5 5 5" /></svg>
        <svg viewBox="0 0 16 14" className="mr-[9px] h-[14px] w-4" fill="none" stroke="#fff" strokeWidth="1.100" aria-hidden="true"><path d="M1 5h2l3.500-3.500v11L3 9H1zM9 4.500c1.500 1.500 1.500 3.500 0 5M11 3c2.500 2.500 2.500 5.500 0 8M13 1.500c3.300 3.300 3.300 7.700 0 11" /></svg>
        <svg viewBox="0 0 16 14" className="mr-[10px] h-[14px] w-4" fill="none" stroke="#fff" strokeWidth="1.200" aria-hidden="true"><path d="M5 2h10.500v8H4M1 1h3.500v3.500H1zM2.500 4.500V13M9.500 10v3M6 13.400h7" /></svg>
        <span className="mr-3">ENG</span>
        <time className="mr-[17px] text-center text-[11px] leading-[17px]">10:56 AM<br />15/10/2025</time>
        <button aria-label="Notifications" className="relative mr-[13px] size-6">
          <svg viewBox="0 0 24 24" className="size-6" aria-hidden="true"><path d="M1 4h16v13H10l-4 4v-4H1z" fill="#fff" /><path d="M3.500 7.500h11M3.500 10.500h11M3.500 13.500h7" stroke="#222" strokeWidth="1.200" /></svg>
          <span className="absolute top-3 left-2 grid size-4 place-items-center rounded-full border border-[#888] bg-[#2a2a2a] text-[10px] leading-none">1</span>
        </button>
        <span className="h-full w-[5px] border-l border-[#777]" />
      </div>
    </div>
  );
}

export default function App() {
  return (
    <div className="relative flex min-h-screen flex-col bg-black">
      <ViewerTitle />
      <main className={`relative mx-14 flex flex-1 flex-col bg-white ${tahoma}`}>
        <div className="flex h-[45px] items-center justify-between bg-[#126bbb] pr-6 pl-[13px] text-[#6fa9dd]">
          <LotusIcon className="size-6" />
          <div className="flex gap-[54px]">
            <Minimize className="size-[14px]" />
            <Restore className="size-[14px]" />
            <Cross className="size-[15px]" />
          </div>
        </div>
        <MenuBar />
        <section className="-mt-px ml-[15px] flex flex-1 flex-col border-t-[3px] border-l-[3px] border-[#828282]">
          <div className="flex h-[54px] items-center justify-between border-b-2 border-[#e0e0e0] pr-[10px] pl-4">
            <h2 className="pt-[2px] text-[23px] font-bold text-[#0c0c0c]">Đăng ký sử dụng dịch vụ I-VAN</h2>
            <button aria-label="Help page" className="mb-1 grid size-[34px] place-items-center rounded-full bg-[#55585e]">
              <svg viewBox="0 0 34 34" className="size-[34px]" fill="none" stroke="#fff" strokeWidth="3.200" aria-hidden="true">
                <path d="M11.500 13.500c0-9 12-8.500 12-1.500 0 5-6 4.500-6 10" />
                <path d="M17.500 25v3.500" />
              </svg>
            </button>
          </div>
          <div className="flex flex-1">
            <Form />
            <ScrollBar />
          </div>
          <div className="mr-[3px] flex h-[57px] items-center justify-end gap-[13px] border-y-2 border-r-2 border-[#e0e0e0] pt-[2px] pr-[15px] text-[15px] text-[#505050]">
            <button className="h-8 w-[102px] border-[3px] border-[#1d6bb5] bg-white">Đăng ký</button>
            <button className="h-8 w-[102px] border-2 border-[#c4c4c4] bg-white">Đóng</button>
          </div>
        </section>
        <div className="h-[3px] bg-white" />
        <StatusBar />
        <RemoteTaskbar />
        <ViewerToolbar />
        <ErrorDialog />
        <button aria-label="Expand chat panel" className="absolute top-[486px] right-0">
          <svg viewBox="0 0 37 94" className="h-[94px] w-[37px]" aria-hidden="true">
            <path d="M37 .500H.500V58L37 94" fill="#f3f3f3" stroke="#8f8f8f" />
            <path d="M20 19h6l-6 9 6 9h-6l-7-9z" fill="#2f8cba" />
            <path d="M11 37.500h16" stroke="#b5b5b5" />
          </svg>
        </button>
      </main>
      <LocalTaskbar />
      <button aria-label="Expand side panel" className="absolute top-[139px] right-0">
        <svg viewBox="0 0 26 68" className="h-[68px] w-[26px]" aria-hidden="true">
          <path d="M0 0h26v68L0 42z" fill="#f0f0f0" />
          <path d="M14 10h6l-6 9 6 9h-6l-7-9z" fill="#2f8cba" />
          <path d="M5 29.500h16" stroke="#b5b5b5" />
        </svg>
      </button>
    </div>
  );
}
